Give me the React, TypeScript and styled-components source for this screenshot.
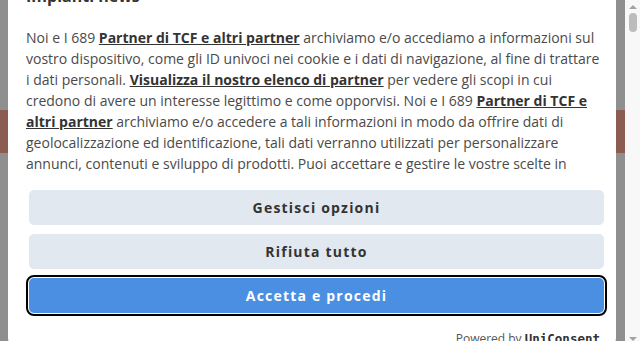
import React from 'react';
import styled, { createGlobalStyle } from 'styled-components';

const GlobalStyle = createGlobalStyle`
  html, body {
    margin: 0;
    padding: 0;
    overflow: hidden;
  }
  body {
    font-family: 'Open Sans', 'Liberation Sans', sans-serif;
  }
`;

function App() {
  return (
    <>
      <GlobalStyle />
      <Page>
        <Backdrop>
          <Modal>
            <Title>Impianti news</Title>
            <Body>
              Noi e I 689 <Strong>Partner di TCF e altri partner</Strong> archiviamo e/o accediamo a informazioni sul
              <br />
              vostro dispositivo, come gli ID univoci nei cookie e i dati di navigazione, al fine di trattare
              <br />
              i dati personali. <Strong>Visualizza il nostro elenco di partner</Strong> per vedere gli scopi in cui
              <br />
              credono di avere un interesse legittimo e come opporvisi. Noi e I 689 <Strong>Partner di TCF e</Strong>
              <br />
              <Strong>altri partner</Strong> archiviamo e/o accedere a tali informazioni in modo da offrire dati di
              <br />
              geolocalizzazione ed identificazione, tali dati verranno utilizzati per personalizzare
              <br />
              annunci, contenuti e sviluppo di prodotti. Puoi accettare e gestire le vostre scelte in
              <br />
              qualsiasi momento tramite il link nella pagina.
            </Body>
            <Buttons>
              <ActionButton>Gestisci opzioni</ActionButton>
              <ActionButton>Rifiuta tutto</ActionButton>
              <ActionButton $primary>Accetta e procedi</ActionButton>
            </Buttons>
            <Powered>
              Powered by <Brand>UniConsent</Brand>
            </Powered>
          </Modal>
        </Backdrop>
        <Scrollbar>
          <Arrow $dir='up' />
          <Thumb />
          <Track />
          <Arrow $dir='down' />
        </Scrollbar>
      </Page>
    </>
  );
}

export default App;

const Page = styled.div`
  display: flex;
  flex-direction: row;
  width: 640px;
  height: 341px;
  overflow: hidden;
`;

const Backdrop = styled.div`
  flex: 1;
  display: flex;
  flex-direction: column;
  padding: 0 9px 0 8px;
  background: linear-gradient(
    to bottom,
    #8f8f8f 0,
    #8f8f8f 110px,
    #8c5b52 110px,
    #8c5b52 153px,
    #8f8f8f 153px
  );
`;

const Modal = styled.div`
  width: 608px;
  margin-top: -20px;
  background: #ffffff;
  border-radius: 9px;
  padding: 0 0 0 18px;
  box-sizing: border-box;
  display: flex;
  flex-direction: column;
`;

const Title = styled.div`
  font-size: 16px;
  font-weight: 700;
  line-height: 22px;
  color: #333333;
  padding-top: 5px;
`;

const Body = styled.div`
  width: 586px;
  height: 147px;
  margin-top: 20px;
  overflow: hidden;
  font-size: 14px;
  line-height: 21px;
  color: #4a4a4a;
`;

const Strong = styled.a`
  font-weight: 700;
  color: #333333;
  text-decoration: underline;
  cursor: pointer;
`;

const Buttons = styled.div`
  display: flex;
  flex-direction: column;
  gap: 9px;
  margin-top: 16px;
  margin-left: 3px;
  width: 575px;
`;

const ActionButton = styled.button<{ $primary?: boolean }>`
  height: 35px;
  border: none;
  border-radius: 5px;
  background: ${props => (props.$primary ? '#4a8fe2' : '#e2e8f0')};
  color: ${props => (props.$primary ? '#ffffff' : '#333333')};
  font-family: 'Open Sans', 'Liberation Sans', sans-serif;
  font-size: 14px;
  font-weight: 700;
  letter-spacing: 1.2px;
  outline: ${props => (props.$primary ? '2px solid #000000' : 'none')};
  outline-offset: 1px;
  cursor: pointer;
  padding: 0;
`;

const Powered = styled.div`
  align-self: flex-end;
  margin-right: 16px;
  margin-top: 18px;
  font-size: 12px;
  color: #555555;
  line-height: 16px;
`;

const Brand = styled.span`
  font-family: 'DejaVu Sans Mono', 'Liberation Mono', monospace;
  font-weight: 700;
  font-size: 12.5px;
  color: #333333;
`;

const Scrollbar = styled.div`
  width: 15px;
  display: flex;
  flex-direction: column;
  align-items: center;
  background: #f8f8f8;
`;

const Arrow = styled.div<{ $dir: 'up' | 'down' }>`
  width: 0;
  height: 0;
  margin: ${props => (props.$dir === 'up' ? '5px 0 4px' : '4px 0 0')};
  border-left: 4px solid transparent;
  border-right: 4px solid transparent;
  ${props =>
    props.$dir === 'up' ? 'border-bottom: 4px solid #a3a3a3;' : 'border-top: 4px solid #a3a3a3;'}
`;

const Thumb = styled.div`
  width: 8px;
  height: 19px;
  border-radius: 4px;
  background: #bcbcbc;
`;

const Track = styled.div`
  flex: 1;
`;
